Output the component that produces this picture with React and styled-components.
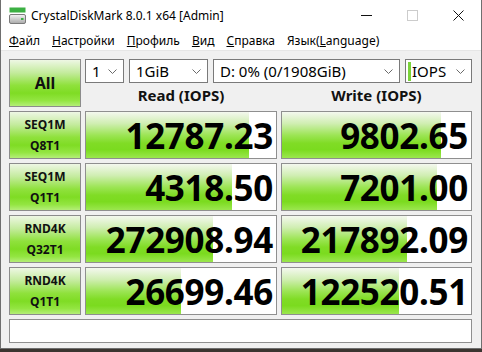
import React from 'react';
import styled, { createGlobalStyle } from 'styled-components';

const GlobalStyle = createGlobalStyle`
  html, body {
    margin: 0;
    padding: 0;
    background: #3b3530;
  }
  body {
    font-family: 'Noto Sans', 'Open Sans', sans-serif;
  }
`;

const rows = [
  { top: 'SEQ1M', bottom: 'Q8T1', read: '12787.23', readBar: 86, write: '9802.65', writeBar: 84 },
  { top: 'SEQ1M', bottom: 'Q1T1', read: '4318.50', readBar: 77, write: '7201.00', writeBar: 82 },
  { top: 'RND4K', bottom: 'Q32T1', read: '272908.94', readBar: 67, write: '217892.09', writeBar: 66 },
  { top: 'RND4K', bottom: 'Q1T1', read: '26699.46', readBar: 50, write: '122520.51', writeBar: 62 },
];

const menu = [
  { u: 'Ф', rest: 'айл' },
  { u: 'Н', rest: 'астройки' },
  { u: 'П', rest: 'рофиль' },
  { u: 'В', rest: 'ид' },
  { u: 'С', rest: 'правка' },
  { pre: 'Язык(', u: 'L', rest: 'anguage)' },
];

const Chevron = () => (
  <svg width='9' height='5' viewBox='0 0 9 5'>
    <polyline points='0.5,0.5 4.5,4.5 8.5,0.5' fill='none' stroke='#6a6a6a' strokeWidth='1' />
  </svg>
);

const AppIcon = () => (
  <svg width='17' height='17' viewBox='0 0 17 17'>
    <defs>
      <linearGradient id='drv' x1='0' y1='0' x2='0' y2='1'>
        <stop offset='0' stopColor='#f4f4f4' />
        <stop offset='1' stopColor='#a9a9a9' />
      </linearGradient>
    </defs>
    <rect x='0.5' y='0.5' width='16' height='5' fill='#3cb043' />
    <rect x='0.5' y='7.5' width='16' height='9' rx='1.5' fill='url(#drv)' stroke='#7b7b7b' />
    <rect x='12' y='11' width='2.5' height='2' fill='#3cb043' />
  </svg>
);

const App = () => {
  return (
    <>
      <GlobalStyle />
      <Window>
        <TitleBar>
          <TitleLeft>
            <AppIcon />
            <TitleText>CrystalDiskMark 8.0.1 x64 [Admin]</TitleText>
          </TitleLeft>
          <Controls>
            <CtrlButton>
              <svg width='11' height='1' viewBox='0 0 11 1'>
                <rect width='11' height='1' fill='#111' />
              </svg>
            </CtrlButton>
            <CtrlButton>
              <svg width='11' height='11' viewBox='0 0 11 11'>
                <rect x='0.5' y='0.5' width='10' height='10' fill='none' stroke='#cccccc' />
              </svg>
            </CtrlButton>
            <CtrlButton>
              <svg width='11' height='11' viewBox='0 0 11 11'>
                <path d='M0.5 0.5 L10.5 10.5 M10.5 0.5 L0.5 10.5' stroke='#111' strokeWidth='1' />
              </svg>
            </CtrlButton>
          </Controls>
        </TitleBar>
        <MenuBar>
          {menu.map((m) => (
            <MenuItem key={m.rest}>
              {m.pre}
              <u>{m.u}</u>
              {m.rest}
            </MenuItem>
          ))}
        </MenuBar>
        <Client>
          <Board>
            <AllButton>All</AllButton>
            <TopRight>
              <ComboRow>
                <Combo width='39px'>
                  <span>1</span>
                  <Chevron />
                </Combo>
                <Combo width='79px'>
                  <span>1GiB</span>
                  <Chevron />
                </Combo>
                <Combo width='187px'>
                  <span>D: 0% (0/1908GiB)</span>
                  <Chevron />
                </Combo>
                <Combo width='67px' marked>
                  <span>IOPS</span>
                  <Chevron />
                </Combo>
              </ComboRow>
              <Headers>
                <Header>Read (IOPS)</Header>
                <Header>Write (IOPS)</Header>
              </Headers>
            </TopRight>
            {rows.map((r) => (
              <React.Fragment key={r.read}>
                <TestButton>
                  <span>{r.top}</span>
                  <span>{r.bottom}</span>
                </TestButton>
                <Result>
                  <Bar style={{ width: `${r.readBar}%` }} />
                  <Value>{r.read}</Value>
                </Result>
                <Result>
                  <Bar style={{ width: `${r.writeBar}%` }} />
                  <Value>{r.write}</Value>
                </Result>
              </React.Fragment>
            ))}
            <Comment />
          </Board>
        </Client>
      </Window>
    </>
  );
};

const Window = styled.div`
  width: 480px;
  height: 348px;
  background: #f0f0f0;
  border: 1px solid #6f6f6f;
  border-top: none;
  display: flex;
  flex-direction: column;
  overflow: hidden;
`;

const TitleBar = styled.div`
  flex-shrink: 0;
  height: 30px;
  background: #fff;
  display: flex;
  align-items: center;
  justify-content: space-between;
`;

const TitleLeft = styled.div`
  display: flex;
  align-items: center;
  padding-left: 8px;
  gap: 5px;
`;

const TitleText = styled.span`
  font-size: 12px;
  color: #000;
`;

const Controls = styled.div`
  display: flex;
  height: 30px;
`;

const CtrlButton = styled.div`
  width: 46px;
  height: 30px;
  display: flex;
  align-items: center;
  justify-content: center;
`;

const MenuBar = styled.div`
  flex-shrink: 0;
  height: 20px;
  background: #fff;
  display: flex;
  align-items: center;
  padding-left: 2px;
  border-bottom: 1px solid #e6e6e6;
`;

const MenuItem = styled.span`
  font-size: 12px;
  color: #000;
  padding: 0 6px;
`;

const Client = styled.div`
  flex: 1;
  padding: 8px 0 0 8px;
`;

const Board = styled.div`
  display: grid;
  grid-template-columns: 72px 192px 191px;
  grid-template-rows: repeat(5, 48px) 24px;
  column-gap: 4px;
  row-gap: 4px;
`;

const greenButton = `
  border: 1px solid #8c8c8c;
  box-sizing: border-box;
  background: linear-gradient(
    to bottom,
    #eef7e4 0%,
    #c3eb9c 28%,
    #8fe13c 55%,
    #7fdc24 72%,
    #93e541 88%,
    #b4ee78 100%
  );
  color: #111;
  font-weight: 700;
  display: flex;
  flex-direction: column;
  align-items: center;
  justify-content: center;
`;

const AllButton = styled.div`
  ${greenButton}
  font-size: 16px;
`;

const TestButton = styled.div`
  ${greenButton}
  font-size: 12px;
  line-height: 21px;
`;

const TopRight = styled.div`
  grid-column: 2 / 4;
  display: flex;
  flex-direction: column;
`;

const ComboRow = styled.div`
  display: flex;
  gap: 5px;
  height: 24px;
`;

const Combo = styled.div`
  width: ${(p) => p.width};
  box-sizing: border-box;
  height: 24px;
  background: #fff;
  border: 1px solid #7a7a7a;
  display: flex;
  align-items: center;
  justify-content: space-between;
  padding: 0 6px 0 ${(p) => (p.marked ? '2px' : '6px')};
  font-size: 15px;
  color: #000;

  span {
    display: flex;
    align-items: center;
    ${(p) =>
      p.marked &&
      `
      &::before {
        content: '';
        width: 3px;
        height: 19px;
        background: #7ad33a;
        margin-right: 1px;
      }
    `}
  }
`;

const Headers = styled.div`
  display: grid;
  grid-template-columns: 192px 191px;
  column-gap: 4px;
  height: 24px;
`;

const Header = styled.div`
  display: flex;
  align-items: center;
  justify-content: center;
  font-size: 15px;
  font-weight: 700;
  color: #111;
`;

const Result = styled.div`
  position: relative;
  box-sizing: border-box;
  border: 1px solid #8f8f8f;
  background: #fff;
  display: flex;
  align-items: center;
  justify-content: flex-end;
  padding-right: 3px;
  overflow: hidden;
`;

const Bar = styled.div`
  position: absolute;
  left: 0;
  top: 0;
  bottom: 0;
  background: linear-gradient(
    to bottom,
    #f4f8ef 0%,
    #d0eeb2 25%,
    #9de556 50%,
    #80dc25 68%,
    #7bdb1f 82%,
    #9be74e 100%
  );
`;

const Value = styled.span`
  position: relative;
  font-size: 35px;
  font-weight: 700;
  color: #000;
  letter-spacing: -0.3px;
  line-height: 1;
`;

const Comment = styled.div`
  grid-column: 1 / 4;
  box-sizing: border-box;
  border: 1px solid #8f8f8f;
  background: #fff;
`;

export default App;
